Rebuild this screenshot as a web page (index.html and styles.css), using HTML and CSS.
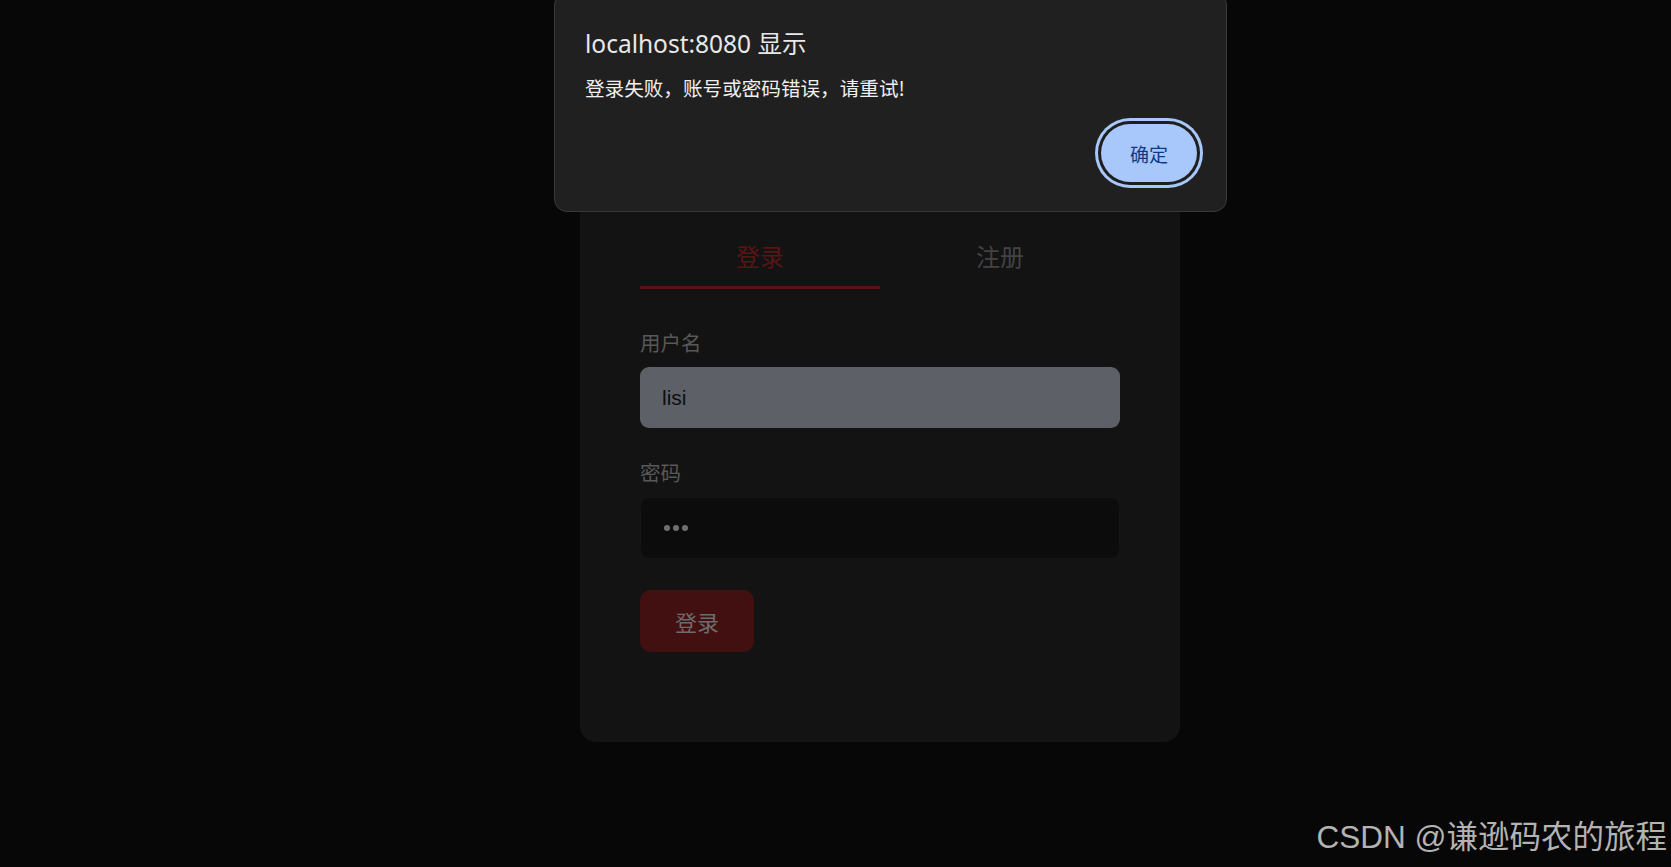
FILE: index.html
```html
<!DOCTYPE html>
<html lang="zh-CN">
<head>
<meta charset="utf-8">
<title>登录</title>
<link rel="stylesheet" href="styles.css">
</head>
<body>
<div class="page">
  <div class="card">
    <div class="tabs">
      <div class="tab active">登录</div>
      <div class="tab">注册</div>
    </div>
    <form class="form">
      <div class="field">
        <label class="label">用户名</label>
        <div class="input filled">lisi</div>
      </div>
      <div class="field">
        <label class="label">密码</label>
        <div class="input password"><span class="dot"></span><span class="dot"></span><span class="dot"></span></div>
      </div>
      <button type="button" class="submit">登录</button>
    </form>
  </div>
</div>

<div class="dialog">
  <div class="dialog-title">localhost:8080 显示</div>
  <div class="dialog-msg">登录失败，账号或密码错误，请重试!</div>
  <div class="dialog-actions">
    <button type="button" class="dialog-ok">确定</button>
  </div>
</div>

<div class="watermark">CSDN @谦逊码农的旅程</div>
</body>
</html>
```
FILE: styles.css
```css
* { box-sizing: border-box; }

html, body {
  margin: 0;
  padding: 0;
  height: 100%;
}

body {
  background: #070707;
  font-family: "Noto Sans", "Noto Sans CJK SC", sans-serif;
  overflow: hidden;
  position: relative;
}

.page {
  display: flex;
  justify-content: center;
  padding-top: 125px;
  padding-left: 89px;
}

.card {
  width: 600px;
  background: #131313;
  border-radius: 16px;
  padding: 60px 60px 90px;
}

.tabs {
  display: flex;
  margin-top: 44px;
}

.tab {
  flex: 1;
  text-align: center;
  font-family: "Noto Sans CJK SC", sans-serif;
  font-size: 24px;
  line-height: 32px;
  padding: 11px 0 14px;
  color: #434343;
  border-bottom: 3px solid transparent;
}

.tab.active {
  color: #5a1414;
  border-bottom-color: #5a1212;
}

.form {
  margin: 39px 0 0;
  display: flex;
  flex-direction: column;
  align-items: flex-start;
}

.field {
  width: 100%;
  margin-bottom: 30px;
  display: flex;
  flex-direction: column;
}

.field:last-of-type { margin-bottom: 31px; }

.label {
  font-family: "Noto Sans CJK SC", sans-serif;
  font-size: 20.5px;
  line-height: 28px;
  color: #585858;
  margin-bottom: 11px;
}

.input {
  height: 61px;
  border-radius: 9px;
  padding: 0 22px;
  display: flex;
  align-items: center;
  font-family: "Liberation Sans", sans-serif;
  font-size: 21px;
}

.input.filled {
  background: #5d6067;
  color: #0e0e0e;
}

.input.password {
  height: 62px;
  background: #0c0c0c;
  border: 1px solid #151515;
  padding-left: 23px;
  gap: 3px;
}

.dot {
  width: 6px;
  height: 6px;
  border-radius: 50%;
  background: #6f6f6f;
}

.submit {
  width: 114px;
  height: 62px;
  border: none;
  border-radius: 11px;
  background: #431011;
  color: #6c6c6c;
  font-family: "Noto Sans CJK SC", sans-serif;
  font-size: 22px;
  padding: 0;
}

/* alert dialog overlay */
.dialog {
  position: absolute;
  left: 554px;
  top: -8px;
  width: 673px;
  background: #202020;
  border: 1px solid #393939;
  border-radius: 13px;
  padding: 37px 29px 29px 30px;
  color: #e6e6e6;
}

.dialog-title {
  font-family: "Noto Sans", "Noto Sans CJK SC", sans-serif;
  font-size: 24.5px;
  line-height: 28px;
  color: #e8e8e8;
}

.dialog-msg {
  margin-top: 16px;
  font-family: "Noto Sans CJK SC", sans-serif;
  font-size: 19.6px;
  line-height: 28px;
  color: #f0f0f0;
}

.dialog-actions {
  display: flex;
  justify-content: flex-end;
  margin-top: 22px;
}

.dialog-ok {
  width: 96px;
  height: 58px;
  border: none;
  border-radius: 29px;
  background: #a8c7fa;
  color: #0b3a86;
  font-family: "Noto Sans CJK SC", sans-serif;
  font-size: 19px;
  padding: 0;
  box-shadow: 0 0 0 3px #1e1e1e, 0 0 0 6px #a8c7fa;
}

.watermark {
  position: absolute;
  right: 4px;
  bottom: 12px;
  font-family: "Liberation Sans", "Noto Sans CJK SC", sans-serif;
  font-size: 31.5px;
  line-height: 36px;
  color: #b3b3b3;
  white-space: nowrap;
}
```
